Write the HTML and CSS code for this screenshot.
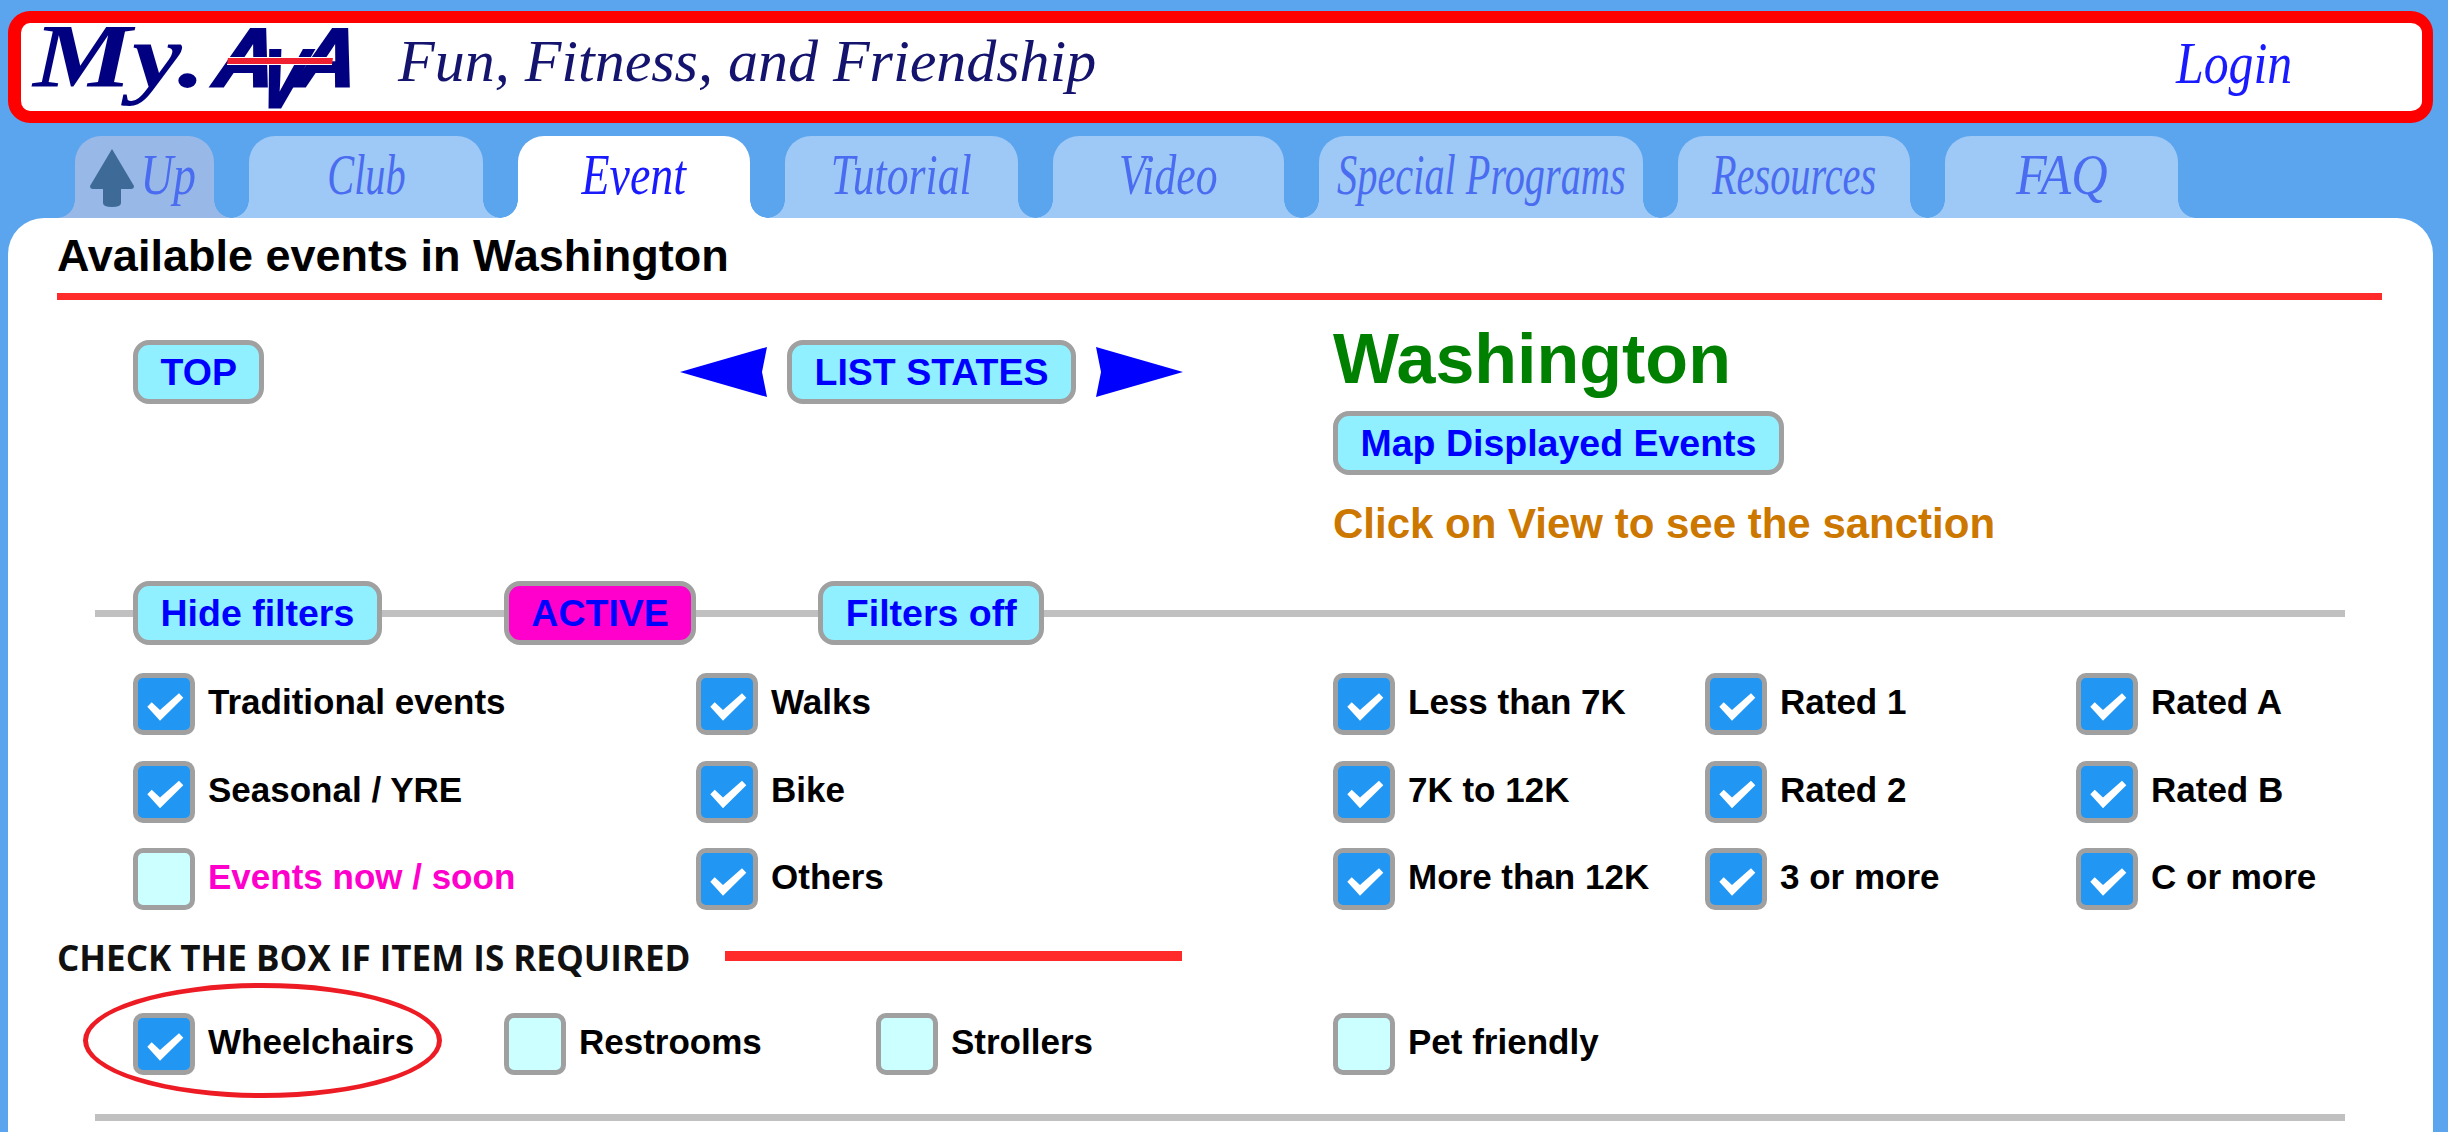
FILE: index.html
```html
<!DOCTYPE html>
<html lang="en">
<head>
    <meta charset="UTF-8">
    <title>My.AVA - Available events</title>
    <link rel="stylesheet" href="styles.css">
</head>
<body>
    <header class="banner">
        <div class="logo">
            <span class="logo-my">My.</span>
            <span class="logo-ava"><span>A</span><span class="logo-v">V</span><span>A</span><i class="logo-stripe"></i></span>
        </div>
        <div class="slogan">Fun, Fitness, and Friendship</div>
        <a class="login"><span>Login</span></a>
    </header>

    <nav class="tabs">
        <a class="tab tab-up">
            <svg class="up-arrow" viewBox="0 0 46 58"><path d="M23 0 L45 37 Q45 40 42 40 L32 40 L32 54 Q32 58 23 58 Q14 58 14 54 L14 40 L4 40 Q1 40 1 37 Z"/></svg>
            <span class="tab-text">Up</span>
        </a>
        <a class="tab w-club"><span class="tab-text">Club</span></a>
        <a class="tab tab-on w-event"><span class="tab-text">Event</span></a>
        <a class="tab w-tutorial"><span class="tab-text">Tutorial</span></a>
        <a class="tab w-video"><span class="tab-text">Video</span></a>
        <a class="tab w-special"><span class="tab-text">Special Programs</span></a>
        <a class="tab w-resources"><span class="tab-text">Resources</span></a>
        <a class="tab w-faq"><span class="tab-text">FAQ</span></a>
    </nav>

    <main class="card">
        <h1 class="title">Available events in Washington</h1>

        <section class="top-row">
            <div class="top-left"><a class="btn">TOP</a></div>
            <div class="top-nav">
                <svg class="nav-arrow" viewBox="0 0 87 50"><path d="M0 25 L87 0 L82 25 L87 50 Z"/></svg>
                <a class="btn">LIST STATES</a>
                <svg class="nav-arrow" viewBox="0 0 87 50"><path d="M87 25 L0 0 L5 25 L0 50 Z"/></svg>
            </div>
            <div class="top-state">
                <h2 class="state">Washington</h2>
                <a class="btn btn-map">Map Displayed Events</a>
                <p class="hint">Click on View to see the sanction</p>
            </div>
        </section>

        <div class="filter-bar">
            <a class="btn">Hide filters</a>
            <a class="btn btn-active">ACTIVE</a>
            <a class="btn">Filters off</a>
        </div>

        <div class="checks">
            <label class="check"><i class="box on"></i>Traditional events</label>
            <label class="check"><i class="box on"></i>Walks</label>
            <label class="check"><i class="box on"></i>Less than 7K</label>
            <label class="check"><i class="box on"></i>Rated 1</label>
            <label class="check"><i class="box on"></i>Rated A</label>

            <label class="check"><i class="box on"></i>Seasonal / YRE</label>
            <label class="check"><i class="box on"></i>Bike</label>
            <label class="check"><i class="box on"></i>7K to 12K</label>
            <label class="check"><i class="box on"></i>Rated 2</label>
            <label class="check"><i class="box on"></i>Rated B</label>

            <label class="check check-soon"><i class="box"></i>Events now / soon</label>
            <label class="check"><i class="box on"></i>Others</label>
            <label class="check"><i class="box on"></i>More than 12K</label>
            <label class="check"><i class="box on"></i>3 or more</label>
            <label class="check"><i class="box on"></i>C or more</label>
        </div>

        <div class="required">
            <span class="required-text">CHECK THE BOX IF ITEM IS REQUIRED</span>
            <span class="required-line"></span>
        </div>

        <div class="req-items">
            <label class="check req-wheel"><i class="box on"></i>Wheelchairs<i class="ring"></i></label>
            <label class="check req-rest"><i class="box"></i>Restrooms</label>
            <label class="check req-stroll"><i class="box"></i>Strollers</label>
            <label class="check"><i class="box"></i>Pet friendly</label>
        </div>

        <hr class="bottom-line">
    </main>
</body>
</html>
```

FILE: styles.css
```css
* {
    box-sizing: border-box;
}
html, body {
    height: 100%;
}
body {
    margin: 0;
    padding: 11px 15px 0 8px;
    background-color: #5ba4ee;
    font-family: "Liberation Sans", Arial, sans-serif;
    overflow: hidden;
}
a {
    text-decoration: none;
}

/* banner */
.banner {
    display: flex;
    align-items: flex-start;
    height: 112px;
    background-color: #fff;
    border: 12px solid #f00;
    border-left-width: 13px;
    border-right-width: 11px;
    border-radius: 22px;
    font-family: "Liberation Serif", "Times New Roman", serif;
    font-style: italic;
}
.logo {
    display: flex;
    width: 377px;
    padding-left: 12px;
    color: #000080;
}
.logo-my {
    width: 184px;
    font-size: 90px;
    line-height: 67px;
    font-weight: bold;
    transform: scaleX(1.24);
    transform-origin: left;
    white-space: nowrap;
}
.logo-ava {
    position: relative;
    display: flex;
    font-family: "Liberation Sans", Arial, sans-serif;
    font-weight: bold;
    font-size: 82px;
    line-height: 69px;
    letter-spacing: -16px;
    -webkit-text-stroke: 3px #000080;
    transform: skewX(-8deg);
}
.logo-v {
    transform: translateY(21px) scaleX(.8);
}
.logo-stripe {
    position: absolute;
    left: 11px;
    top: 34px;
    width: 105px;
    height: 8px;
    background-color: #f02030;
    border-top: 1px solid #fff;
    border-bottom: 1px solid #fff;
}
.slogan {
    width: 1778px;
    font-size: 60px;
    line-height: 76px;
    color: #14146e;
    white-space: nowrap;
}
.login {
    font-size: 60px;
    line-height: 80px;
    color: #1a1aff;
}
.login span {
    display: inline-block;
    transform: scaleX(.83);
    transform-origin: left;
}

/* tabs */
.tabs {
    display: flex;
    gap: 35px;
    height: 82px;
    margin-top: 13px;
    padding-left: 67px;
}
.tab {
    position: relative;
    display: flex;
    justify-content: center;
    align-items: center;
    width: 232px;
    padding-bottom: 4px;
    background-color: #9ec8f5;
    border-radius: 26px 26px 0 0;
    font-family: "Liberation Serif", "Times New Roman", serif;
    font-style: italic;
    font-size: 56px;
    color: #4a6cf0;
    white-space: nowrap;
}
.tab::before, .tab::after {
    content: "";
    position: absolute;
    bottom: 0;
    width: 18px;
    height: 18px;
}
.tab::before {
    left: -18px;
    background: radial-gradient(circle at 0 0, transparent 17.5px, #9ec8f5 18px);
}
.tab::after {
    right: -18px;
    background: radial-gradient(circle at 100% 0, transparent 17.5px, #9ec8f5 18px);
}
.tab-text {
    display: inline-block;
    transform: scaleX(.72);
}
.tab-up {
    width: 139px;
    justify-content: flex-start;
    padding-left: 14px;
    background-color: #98b8e8;
}
.tab-up::before {
    background: radial-gradient(circle at 0 0, transparent 17.5px, #98b8e8 18px);
}
.tab-up::after {
    background: radial-gradient(circle at 100% 0, transparent 17.5px, #98b8e8 18px);
}
.tab-up .tab-text {
    margin-left: -1px;
    transform: scaleX(.81);
}
.up-arrow {
    flex: none;
    width: 46px;
    height: 58px;
    margin-top: 5px;
    fill: #3d6a96;
}
.w-club { width: 234px; }
.w-event .tab-text { transform: scaleX(.82); }
.w-tutorial { width: 233px; }
.w-tutorial .tab-text { transform: scaleX(.78); }
.w-video { width: 231px; }
.w-video .tab-text { transform: scaleX(.78); }
.w-special { width: 324px; }
.w-faq { width: 233px; }
.w-faq .tab-text { transform: scaleX(.9); }
.tab-on {
    background-color: #fff;
    color: #1a1aff;
}
.tab-on::before {
    background: radial-gradient(circle at 0 0, transparent 17.5px, #fff 18px);
}
.tab-on::after {
    background: radial-gradient(circle at 100% 0, transparent 17.5px, #fff 18px);
}

/* main card */
.card {
    height: 920px;
    padding: 0 0 0 49px;
    background-color: #fff;
    border-radius: 36px 36px 0 0;
}
.title {
    width: 2325px;
    height: 82px;
    margin: 0;
    padding-top: 15px;
    font-size: 45px;
    line-height: 46px;
    color: #000;
    border-bottom: 7px solid #ff2a2a;
}

/* buttons */
.btn {
    display: inline-flex;
    align-items: center;
    height: 64px;
    padding: 0 22.5px;
    background-color: #90f0ff;
    border: 5px solid #a0a0a0;
    border-radius: 16px;
    font-size: 37.5px;
    font-weight: bold;
    color: #00f;
    white-space: nowrap;
}
.btn-active {
    background-color: #ff00cc;
}

/* top section */
.top-row {
    display: flex;
    padding: 40px 0 0 76px;
    height: 281px;
}
.top-left {
    width: 547px;
}
.top-nav {
    display: flex;
    gap: 20px;
    width: 653px;
    height: 64px;
    align-items: center;
}
.nav-arrow {
    flex: none;
    width: 87px;
    height: 50px;
    fill: #00f;
}
.top-state {
    margin-top: -17px;
}
.state {
    margin: 0;
    font-size: 70px;
    line-height: 72px;
    color: #008000;
}
.btn-map {
    margin-top: 16px;
}
.hint {
    margin: 27px 0 0;
    font-size: 42px;
    line-height: 44px;
    font-weight: bold;
    color: #cc7700;
    white-space: nowrap;
}

/* filter bar */
.filter-bar {
    display: flex;
    gap: 122px;
    width: 2250px;
    margin-left: 38px;
    padding-left: 38px;
    background: linear-gradient(#c0c0c0, #c0c0c0) no-repeat center / 100% 7px;
}

/* checkboxes */
.checks {
    display: grid;
    grid-template-columns: 563px 637px 372px 371px 1fr;
    grid-auto-rows: 87.5px;
    margin-top: 28px;
    padding-left: 76px;
}
.check {
    display: flex;
    align-items: flex-start;
    gap: 13px;
    font-size: 35px;
    line-height: 58px;
    font-weight: bold;
    color: #000;
    white-space: nowrap;
}
.check-soon {
    color: #ff00cc;
}
.box {
    position: relative;
    flex: none;
    width: 62px;
    height: 62px;
    background-color: #ccffff;
    border: 5px solid #a0a0a0;
    border-radius: 10px;
}
.box.on {
    background-color: #2196f3;
}
.box.on::after {
    content: "";
    position: absolute;
    inset: 0;
    background-color: #fff;
    clip-path: polygon(9.3px 28.7px, 13.7px 24.3px, 22px 32px, 41px 15.3px, 45.3px 19.7px, 22px 42.7px);
}

/* required items */
.required {
    display: flex;
    align-items: center;
    height: 36px;
    margin-top: 4px;
    gap: 37px;
}
.required-text {
    width: 631px;
    font-family: "Open Sans", sans-serif;
    font-weight: 700;
    font-size: 35px;
    line-height: 36px;
    color: #111;
    white-space: nowrap;
}
.required-line {
    width: 457px;
    height: 10px;
    margin-top: -3px;
    background-color: #ff2a2a;
}
.req-items {
    display: flex;
    margin-top: 37.5px;
    padding-left: 76px;
}
.req-wheel {
    position: relative;
    width: 371px;
}
.req-rest {
    width: 372px;
}
.req-stroll {
    width: 457px;
}
.ring {
    position: absolute;
    left: -50px;
    top: -30px;
    width: 359px;
    height: 115px;
    border: 5px solid #ed1c24;
    border-radius: 50%;
}
.bottom-line {
    width: 2250px;
    height: 7px;
    margin: 39px 0 0 38px;
    border: 0;
    background-color: #c0c0c0;
}
```
